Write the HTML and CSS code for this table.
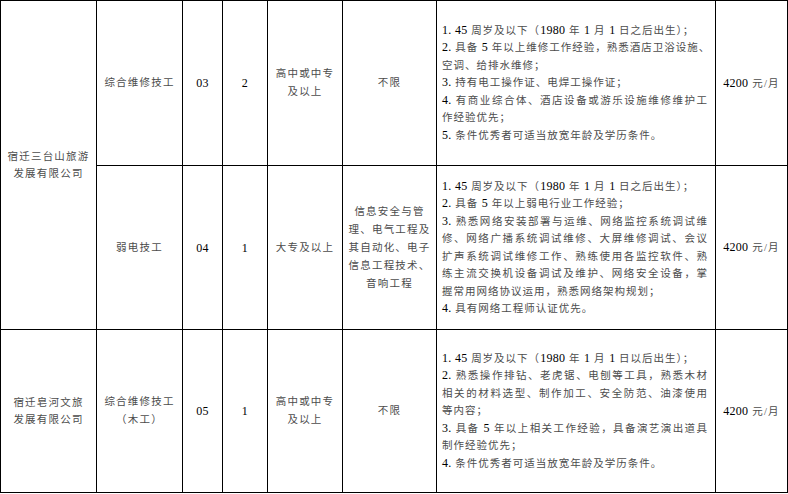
FILE: index.html
```html
<!DOCTYPE html>
<html lang="zh-CN">
<head>
<meta charset="utf-8">
<title>招聘岗位表</title>
<link rel="stylesheet" href="styles.css">
</head>
<body>
<div class="sheet">
  <div class="cell company span2">宿迁三台山旅游<br>发展有限公司</div>
  <div class="cell">综合维修技工</div>
  <div class="cell"><span class="n">03</span></div>
  <div class="cell"><span class="n">2</span></div>
  <div class="cell">高中或中专<br>及以上</div>
  <div class="cell">不限</div>
  <div class="cell detail">
    <div class="txt">
      <span class="ln"><span class="n">1. 45</span> 周岁及以下（<span class="n">1980</span> 年 <span class="n">1</span> 月 <span class="n">1</span> 日之后出生）；</span>
      <span class="ln j"><span class="n">2.</span> 具备 <span class="n">5</span> 年以上维修工作经验，熟悉酒店卫浴设施、</span>
      <span class="ln">空调、给排水维修；</span>
      <span class="ln"><span class="n">3.</span> 持有电工操作证、电焊工操作证；</span>
      <span class="ln j"><span class="n">4.</span> 有商业综合体、酒店设备或游乐设施维修维护工</span>
      <span class="ln">作经验优先；</span>
      <span class="ln"><span class="n">5.</span> 条件优秀者可适当放宽年龄及学历条件。</span>
    </div>
  </div>
  <div class="cell"><span><span class="n">4200</span> 元/月</span></div>

  <div class="cell">弱电技工</div>
  <div class="cell"><span class="n">04</span></div>
  <div class="cell"><span class="n">1</span></div>
  <div class="cell">大专及以上</div>
  <div class="cell">信息安全与管<br>理、电气工程及<br>其自动化、电子<br>信息工程技术、<br>音响工程</div>
  <div class="cell detail">
    <div class="txt">
      <span class="ln"><span class="n">1. 45</span> 周岁及以下（<span class="n">1980</span> 年 <span class="n">1</span> 月 <span class="n">1</span> 日之后出生）；</span>
      <span class="ln"><span class="n">2.</span> 具备 <span class="n">5</span> 年以上弱电行业工作经验；</span>
      <span class="ln j"><span class="n">3.</span> 熟悉网络安装部署与运维、网络监控系统调试维</span>
      <span class="ln j">修、网络广播系统调试维修、大屏维修调试、会议</span>
      <span class="ln j">扩声系统调试维修工作、熟练使用各监控软件、熟</span>
      <span class="ln j">练主流交换机设备调试及维护、网络安全设备，掌</span>
      <span class="ln">握常用网络协议运用，熟悉网络架构规划；</span>
      <span class="ln"><span class="n">4.</span> 具有网络工程师认证优先。</span>
    </div>
  </div>
  <div class="cell"><span><span class="n">4200</span> 元/月</span></div>

  <div class="cell company">宿迁皂河文旅<br>发展有限公司</div>
  <div class="cell">综合维修技工<br>（木工）</div>
  <div class="cell"><span class="n">05</span></div>
  <div class="cell"><span class="n">1</span></div>
  <div class="cell">高中或中专<br>及以上</div>
  <div class="cell">不限</div>
  <div class="cell detail">
    <div class="txt">
      <span class="ln"><span class="n">1. 45</span> 周岁及以下（<span class="n">1980</span> 年 <span class="n">1</span> 月 <span class="n">1</span> 日以后出生）；</span>
      <span class="ln j"><span class="n">2.</span> 熟悉操作排钻、老虎锯、电刨等工具，熟悉木材</span>
      <span class="ln j">相关的材料选型、制作加工、安全防范、油漆使用</span>
      <span class="ln">等内容；</span>
      <span class="ln j"><span class="n">3.</span> 具备 <span class="n">5</span> 年以上相关工作经验，具备演艺演出道具</span>
      <span class="ln">制作经验优先；</span>
      <span class="ln"><span class="n">4.</span> 条件优秀者可适当放宽年龄及学历条件。</span>
    </div>
  </div>
  <div class="cell"><span><span class="n">4200</span> 元/月</span></div>
</div>
</body>
</html>
```
FILE: styles.css
```css
html, body {
  margin: 0;
  padding: 0;
  background: #ffffff;
}

.sheet {
  display: grid;
  grid-template-columns: 95px 85px 39px 44px 74px 93px 278px 71px;
  grid-template-rows: 164px 163px 162px;
  gap: 1px;
  padding: 1px;
  background: #000000;
  width: max-content;
}

.cell {
  background: #ffffff;
  display: flex;
  align-items: center;
  justify-content: center;
  text-align: center;
  font-family: "Liberation Serif", "Noto Sans CJK SC", serif;
  font-size: 10.5px;
  letter-spacing: 1.2px;
  line-height: 18px;
  color: #4c4c4c;
}

.span2 {
  grid-row: span 2;
}

.company {
  line-height: 17px;
}

.n {
  font-family: "Liberation Serif", serif;
  font-size: 12px;
  letter-spacing: 0.3px;
  color: #000000;
}

.detail {
  justify-content: flex-start;
  text-align: left;
  padding: 0 7px 0 5px;
}

.txt {
  width: 100%;
  letter-spacing: 1px;
  line-height: 17.5px;
}

.ln {
  display: block;
  white-space: nowrap;
}

.j {
  text-align: justify;
  text-align-last: justify;
}
```
